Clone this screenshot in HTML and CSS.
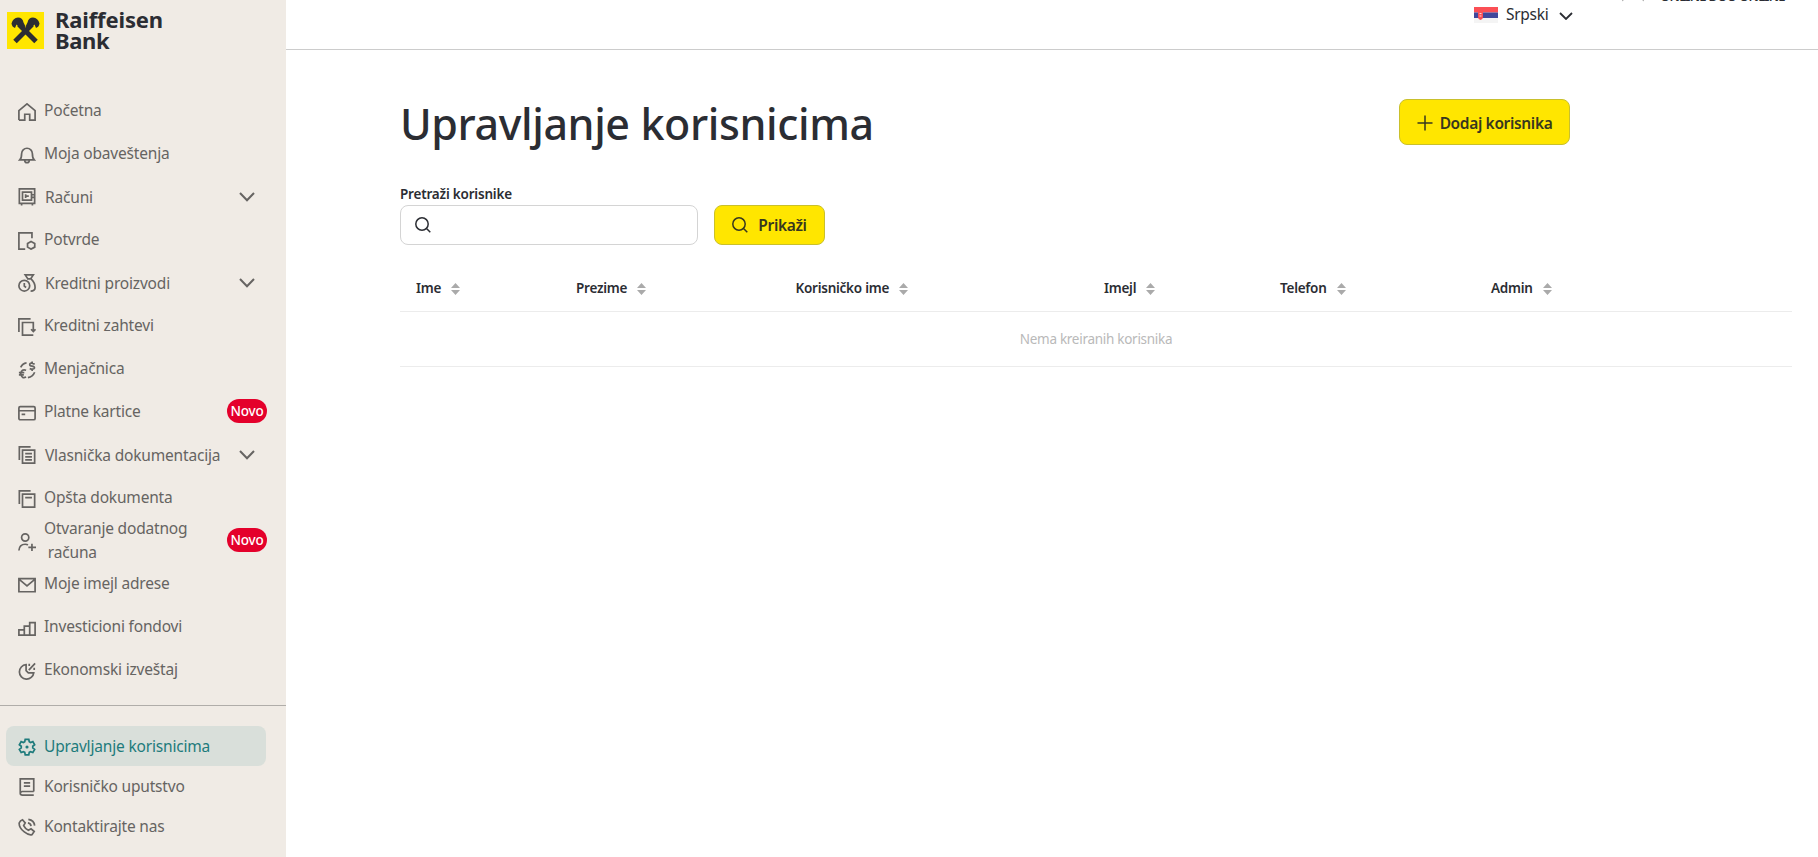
FILE: index.html
```html
<!DOCTYPE html>
<html lang="sr-Latn">
<head>
<meta charset="utf-8">
<title>Upravljanje korisnicima</title>
<link rel="stylesheet" href="styles.css">
</head>
<body>
<div class="app">
  <aside class="sidebar">
    <div class="brand">
      <svg class="brand-mark" viewBox="0 0 37 37"><rect width="37" height="37" fill="#ffe600"/><g fill="none" stroke="#2b2d33" stroke-width="5"><path d="M8 29.500 25 12.500"/><path d="M29 29.500 12 12.500"/></g><g fill="#2b2d33"><path d="M4.500 11.500Q6 6 11 5.500Q15.500 5.500 16.500 10.500L18.500 14.500L14 17L9.500 12.500L8 16Q5 15 4.500 11.500Z"/><path d="M32.500 11.500Q31 6 26 5.500Q21.500 5.500 20.500 10.500L18.500 14.500L23 17L27.500 12.500L29 16Q32 15 32.500 11.500Z"/></g></svg>
      <div class="brand-name"><span class="b1">Raiffeisen</span><span class="b2">Bank</span></div>
    </div>
    <nav class="menu primary">
      <a class="item"><svg class="icon" viewBox="0 0 20 20"><path d="M1 19V8.500L10 1 19 8.500V19H13V12.500H7.500V19H1"/></svg><span>Početna</span></a>
      <a class="item"><svg class="icon" viewBox="0 0 20 20"><path d="M2 15.500C4 13.500 4 12 4 8.500A6 6 0 0 1 16 8.500C16 12 16 13.500 18 15.500ZM7.500 16a2.500 2.500 0 0 0 5 0"/></svg><span>Moja obaveštenja</span></a>
      <a class="item group"><svg class="icon" viewBox="0 0 20 20"><path d="M1.500 1H18.500V17H1.500ZM5 4.500H15V13.500H5ZM4 17v2.500M16 17v2.500M8.500 7v4M8.500 9h3.500M15 7.500h3M15 10.500h3"/></svg><span>Računi</span><svg class="chev" viewBox="0 0 16 10"><path d="M1 1 8 8.300 15 1"/></svg></a>
      <a class="item"><svg class="icon" viewBox="0 0 20 20"><path d="M15.500 7V1H1V19H8"/><path d="M14.500 10.500 18.600 12.700V16.800L14.500 19 10.600 16.800V12.700Z"/></svg><span>Potvrde</span></a>
      <a class="item group"><svg class="icon" viewBox="0 0 20 20"><circle cx="7" cy="13" r="6"/><path d="M7 10v3.500l2 1.500M8 1h9l-3 4.500h-3ZM10 5.500h5.500M15 6c3 3 4 6 4 9s-1.500 4-5 4"/></svg><span>Kreditni proizvodi</span><svg class="chev" viewBox="0 0 16 10"><path d="M1 1 8 8.300 15 1"/></svg></a>
      <a class="item"><svg class="icon" viewBox="0 0 20 20"><path d="M1 15.500V1H14"/><path d="M17 10V5H5V19H17M17 9v6M14.500 12.500 17 15l2.500-2.500"/></svg><span>Kreditni zahtevi</span></a>
      <a class="item"><svg class="icon" viewBox="0 0 20 20"><path d="M3 7Q5 2.500 9.500 2M11 18.500Q16.500 17.500 18.500 12.500M9 10.300Q4 8.500 3 14Q4 20 9 17.800M1 13h6M1 15.500h5.500M18.500 3.500Q13 .8 13 4Q13 5.500 15.500 5.700Q18.500 6 18.300 7.800Q17.500 10 13 8.500M15.700 .5v2M15.700 9v2"/></svg><span>Menjačnica</span></a>
      <a class="item"><svg class="icon" viewBox="0 0 20 20"><rect x="1" y="3" width="18" height="14.500" rx="1.500"/><path d="M1 7.500h18M4 11.500h4"/></svg><span>Platne kartice</span><b class="badge">Novo</b></a>
      <a class="item group"><svg class="icon" viewBox="0 0 20 20"><path d="M1.500 15.500V1H14M5 4.500H18.500V19H5ZM8 8.500h7.500M8 12h7.500M8 15.500h7.500"/></svg><span>Vlasnička dokumentacija</span><svg class="chev" viewBox="0 0 16 10"><path d="M1 1 8 8.300 15 1"/></svg></a>
      <a class="item"><svg class="icon" viewBox="0 0 20 20"><path d="M1.500 15.500V1H14M5 4.500H18.500V19H5ZM8 8.500h7.500"/></svg><span>Opšta dokumenta</span></a>
      <a class="item"><svg class="icon" viewBox="0 0 20 20"><circle cx="8" cy="5" r="4"/><path d="M1 19.500Q1.500 12.500 8 12.500Q10 12.500 11 13.300M15.500 12v8M11.500 16h8.500"/></svg><span>Otvaranje dodatnog<br>&nbsp;računa</span><b class="badge">Novo</b></a>
      <a class="item"><svg class="icon" viewBox="0 0 20 20"><path d="M1 3H19V17.500H1ZM1 3.500 10 11 19 3.500"/></svg><span>Moje imejl adrese</span></a>
      <a class="item"><svg class="icon" viewBox="0 0 20 20"><path d="M1 18V12H7V18ZM7 18V8H13V18ZM13 18V4H19V18ZM7 18H13"/></svg><span>Investicioni fondovi</span></a>
      <a class="item"><svg class="icon" viewBox="0 0 20 20"><path d="M9 3A8 8 0 1 0 17.500 12H11.500L9 9.500ZM12 9 19 1.500M12.500 2v2.500M18 6.500v2.500"/></svg><span>Ekonomski izveštaj</span></a>
    </nav>
    <nav class="menu secondary">
      <a class="item active"><svg class="icon" viewBox="0 0 20 20"><path d="M8 1.500h4l.5 2.700 1.500.9 2.500-1 2 3.400-2.100 1.700v1.800l2.100 1.700-2 3.400-2.500-1-1.500.9-.5 2.700H8l-.5-2.700-1.500-.9-2.500 1-2-3.400 2.100-1.700V9.200L1.500 7.500l2-3.400 2.500 1 1.500-.9Z"/><circle cx="10" cy="10" r=".8"/></svg><span>Upravljanje korisnicima</span></a>
      <a class="item"><svg class="icon" viewBox="0 0 20 20"><path d="M17.500 15V1H2.500V17Q2.500 19 5 19H17.500M17.500 15H4.500Q2.500 15.500 2.500 17M6.500 5.500h7M6.500 9h7"/></svg><span>Korisničko uputstvo</span></a>
      <a class="item"><svg class="icon" viewBox="0 0 20 20"><path d="M5 2 8 5.500 6.300 8.500Q8 12 11.500 13.700L14.500 12 18 15 15.500 18.500Q12 19.500 7 15.500Q1 10.500 1.300 5.500Q2.500 2.500 5 2ZM11 5.500Q14 6 14.500 9M11.500 1.500Q18 2.500 18.500 8.500"/></svg><span>Kontaktirajte nas</span></a>
    </nav>
  </aside>
  <div class="page">
    <header class="topbar">
      <div class="lang">
        <svg class="flag" viewBox="0 0 24 16"><rect width="24" height="16" fill="#f4f4f4"/><rect width="24" height="5.500" fill="#fb4f55"/><rect y="5.500" width="24" height="5.500" fill="#41479b"/><path d="M4 4h5v6q0 2.500-2.500 3Q4 12.500 4 10Z" fill="#fb4f55"/><path d="M5.500 6.500h2M5.500 9h2" stroke="#f4d8d8" fill="none"/></svg>
        <span class="lang-name">Srpski</span>
        <svg class="lang-chev" viewBox="0 0 14 8"><path d="M1 1 7 7 13 1"/></svg>
      </div>
      <div class="account"><svg class="avatar" viewBox="0 0 24 24"><path d="M1 23 5 20M19 20l4 3"/></svg><span>ONLINE DOO ONLINE</span></div>
    </header>
    <main class="content">
      <div class="head">
        <h1>Upravljanje korisnicima</h1>
        <button class="btn add"><svg class="plus" viewBox="0 0 16 16"><path d="M8 .5v15M.5 8h15"/></svg><span>Dodaj korisnika</span></button>
      </div>
      <label class="label" for="q">Pretraži korisnike</label>
      <div class="search">
        <div class="field"><svg class="lens" viewBox="0 0 16 16"><circle cx="7" cy="7" r="6.200"/><path d="M11.500 11.500 15.300 15.300"/></svg><input id="q" type="text"></div>
        <button class="btn show"><svg class="lens" viewBox="0 0 16 16"><circle cx="7" cy="7" r="6.200"/><path d="M11.500 11.500 15.300 15.300"/></svg><span>Prikaži</span></button>
      </div>
      <div class="table">
        <div class="row thead">
          <div><span>Ime</span><svg class="sort" viewBox="0 0 9 12"><path d="M0 5 4.500 0 9 5ZM0 7 4.500 12 9 7Z"/></svg></div>
          <div><span>Prezime</span><svg class="sort" viewBox="0 0 9 12"><path d="M0 5 4.500 0 9 5ZM0 7 4.500 12 9 7Z"/></svg></div>
          <div><span>Korisničko ime</span><svg class="sort" viewBox="0 0 9 12"><path d="M0 5 4.500 0 9 5ZM0 7 4.500 12 9 7Z"/></svg></div>
          <div><span>Imejl</span><svg class="sort" viewBox="0 0 9 12"><path d="M0 5 4.500 0 9 5ZM0 7 4.500 12 9 7Z"/></svg></div>
          <div><span>Telefon</span><svg class="sort" viewBox="0 0 9 12"><path d="M0 5 4.500 0 9 5ZM0 7 4.500 12 9 7Z"/></svg></div>
          <div><span>Admin</span><svg class="sort" viewBox="0 0 9 12"><path d="M0 5 4.500 0 9 5ZM0 7 4.500 12 9 7Z"/></svg></div>
        </div>
        <div class="empty">Nema kreiranih korisnika</div>
      </div>
    </main>
  </div>
</div>
</body>
</html>
```
FILE: styles.css
```css
* { box-sizing: border-box; }
body { margin: 0; background: #fff; color: #2b2d33; font-family: "Noto Sans", sans-serif; overflow: hidden; }
svg { display: block; flex: none; fill: none; stroke: currentColor; }
.app { display: flex; width: 1818px; height: 857px; overflow: hidden; }
.sidebar { width: 286px; flex: none; background: #f0ebe5; color: #666462; }
.brand { display: flex; height: 89px; padding: 12px 0 0 7px; gap: 11px; color: #2b2d33; }
.brand-mark { width: 37px; height: 37px; stroke: none; }
.brand-name { display: flex; flex-direction: column; font-size: 22px; line-height: 21px; font-weight: 700; margin-top: -3px; }
.b1 { letter-spacing: -0.150px; }
.b2 { letter-spacing: -0.400px; }
.menu { display: flex; flex-direction: column; padding: 0 20px 0 6px; }
.item { display: flex; align-items: center; height: 43px; padding: 0 0 0 12px; font-size: 15.500px; line-height: 24px; letter-spacing: -0.180px; white-space: nowrap; }
.item span { margin-left: 8px; }
.primary .item span, .primary .badge { margin-bottom: 2px; }
.icon { width: 18px; height: 18px; stroke-width: 1.900; margin-top: 2px; }
.primary .group span { margin-left: 9px; margin-bottom: 0; }
.primary .group .icon { margin-top: 0; }
.chev { width: 16px; height: 10px; margin-left: auto; margin-right: 11px; stroke-width: 2; }
.badge { margin-left: auto; margin-right: -1px; width: 40px; height: 24px; border-radius: 12px; background: #e4002b; color: #fff; font-size: 13.500px; font-weight: 500; text-align: center; letter-spacing: -0.200px; }
.secondary { border-top: 1px solid #b0ada9; margin-top: 14px; padding-top: 20px; }
.secondary .item { height: 40px; border-radius: 8px; }
.active { background: #d9dfda; color: #1e7b7c; }
.page { flex: 1; min-width: 0; }
.topbar { height: 50px; border-bottom: 1px solid #ccc; display: flex; padding-left: 1188px; overflow: hidden; }
.lang { display: flex; height: 29px; align-items: center; }
.flag { width: 24px; height: 16px; stroke: none; }
.lang-name { font-size: 15.500px; margin-left: 8px; margin-bottom: 1px; width: 43px; letter-spacing: -0.300px; }
.lang-chev { width: 14px; height: 8px; margin-left: 10px; margin-top: 3px; stroke-width: 1.800; }
.account { display: flex; align-items: center; gap: 15px; height: 24px; margin-top: -16px; margin-left: 48px; font-size: 13px; font-weight: 600; letter-spacing: -0.700px; white-space: nowrap; }
.avatar { width: 24px; height: 24px; margin-top: -12px; stroke: #aaa; }
.content { padding: 48px 0 0 114px; }
.head { display: flex; justify-content: space-between; width: 1170px; height: 84px; }
h1 { margin: 0; font-size: 43px; font-weight: 500; line-height: 52px; letter-spacing: -0.400px; white-space: nowrap; }
.btn { display: flex; align-items: center; justify-content: center; border: 1px solid #c9c02c; border-radius: 8px; background: #ffe600; color: #37371f; font: 600 15.500px "Noto Sans", sans-serif; letter-spacing: -0.350px; padding: 0; white-space: nowrap; }
.add { width: 171px; height: 46px; margin-top: 1px; padding-top: 2px; gap: 7px; }
.plus { width: 16px; height: 16px; stroke-width: 1.500; }
.label { display: block; font-size: 13.500px; font-weight: 600; line-height: 23px; padding-top: 1px; margin-bottom: -1px; letter-spacing: -0.200px; }
.search { display: flex; gap: 16px; }
.field { display: flex; align-items: center; width: 298px; height: 40px; padding-left: 14px; border: 1px solid #d4d4d4; border-radius: 8px; }
.field input { border: 0; outline: 0; background: none; flex: 1; min-width: 0; margin: 0 10px; }
.lens { width: 16px; height: 16px; stroke-width: 1.500; }
.show { width: 111px; height: 40px; gap: 10px; }
.table { width: 1392px; margin-top: 21px; font-size: 13.500px; }
.row { display: grid; grid-template-columns: 160px 219.500px 308.500px 176px 211px 1fr; height: 46px; border-bottom: 1px solid #ececec; font-weight: 600; letter-spacing: -0.250px; }
.row > div { display: flex; align-items: center; padding: 0 0 2px 16px; gap: 10px; }
.sort { width: 9px; height: 12px; margin-top: 2px; fill: #aaa; stroke: none; }
.empty { height: 55px; border-bottom: 1px solid #ececec; display: flex; align-items: center; justify-content: center; color: #b9b9b9; letter-spacing: -0.280px; }
```
